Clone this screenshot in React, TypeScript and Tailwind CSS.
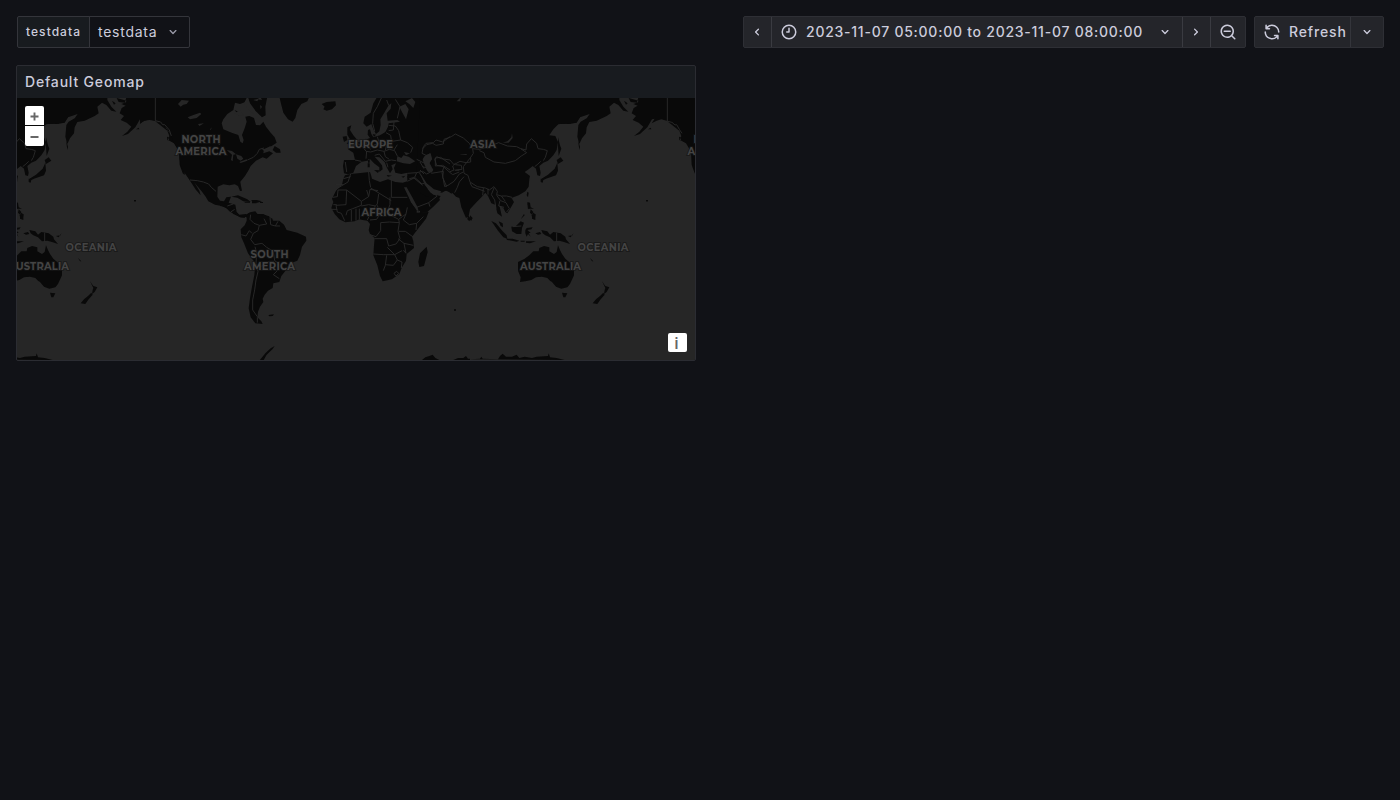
import React from 'react';

const ICONS = {
  down: 'M17,9.17a1,1,0,0,0-1.41,0L12,12.71,8.46,9.17a1,1,0,0,0-1.41,0,1,1,0,0,0,0,1.42l4.24,4.24a1,1,0,0,0,1.42,0L17,10.59A1,1,0,0,0,17,9.17Z',
  clock: 'M12,2A10,10,0,1,0,22,12,10,10,0,0,0,12,2Zm0,18a8,8,0,1,1,8-8A8,8,0,0,1,12,20ZM12,6a1,1,0,0,0-1,1v4H9a1,1,0,0,0,0,2h3a1,1,0,0,0,1-1V7A1,1,0,0,0,12,6Z',
  zoomOut: 'M21.71,20.29,18,16.61A9,9,0,1,0,16.61,18l3.68,3.68a1,1,0,0,0,1.42,0A1,1,0,0,0,21.71,20.29ZM11,18a7,7,0,1,1,7-7A7,7,0,0,1,11,18Zm4-8H7a1,1,0,0,0,0,2h8a1,1,0,0,0,0-2Z',
  sync: 'M19.91,15.51H15.38a1,1,0,0,0,0,2h2.4A8,8,0,0,1,4,12a1,1,0,1,0-2,0,10,10,0,0,0,16.88,7.23V21a1,1,0,0,0,2,0V16.5A1,1,0,0,0,19.91,15.51ZM12,2A10,10,0,0,0,5.12,4.77V3a1,1,0,0,0-2,0V7.5a1,1,0,0,0,1,1h4.5a1,1,0,0,0,0-2H6.22A8,8,0,0,1,20,12a1,1,0,0,0,2,0A10,10,0,0,0,12,2Z',
};

function Icon({ name, className }: { name: keyof typeof ICONS; className: string }) {
  return (
    <svg viewBox="0 0 24 24" fill="currentColor" className={`shrink-0 ${className}`}>
      <path d={ICONS[name]} />
    </svg>
  );
}

type Region = { x: number; y: number; land: string; sea?: string; lines?: string };

// Each region is drawn on its own grid, three units to the pixel.
const REGIONS: Region[] = [
  // Eastern Siberia, Alaska
  {
    x: 560,
    y: 90,
    land: 'M0,20H178V30L190,50 205,65 190,62 175,45 162,38 148,50 152,70 140,78 110,92 88,96 80,112 78,130 66,145 58,162 52,140 55,105 62,95 80,85 89,72 78,76 60,82 48,98 30,102 0,101Z M192,32L203,40 198,44Z M206,24L236,32 232,38 212,36Z M236,20L230,38 220,42 233,47 221,54 215,70 228,78 218,90 236,98 250,110 238,125 222,138 240,132 262,112 276,88 284,86 275,100 290,92 304,88 320,92 340,108 358,122 364,138 360,150 378,160 393,185 395,225 404,250 410,255V20Z M264,118L272,113 274,118Z M357,140L362,142 364,153 358,150Z M258,330H264V334H258Z',
    lines: 'M322,20V94L336,97 345,105 350,104 358,118 366,130',
  },
  // North America
  {
    x: 140,
    y: 90,
    land: 'M0,20H322L318,35 300,42 285,38 280,60 262,72 250,88 245,100 250,118 275,128 295,135 301,155 308,160 311,150 306,135 314,115 320,95 316,80 328,78 342,84 348,105 360,106 370,95 378,110 392,128 404,142 410,158 395,168 372,178 370,190 388,184 399,190 380,206 368,202 348,212 332,228 326,240 315,258 301,275 303,288 306,302 300,303 294,288 284,283 268,286 250,283 233,290 232,320 240,332 252,334 259,322 273,320 266,338 286,344 290,366 298,374 318,372 322,380 302,382 280,372 262,356 245,348 225,344 205,334 197,320 186,305 165,280 160,272 178,302 182,316 168,300 150,272 132,246 122,228 119,205 120,190 110,170 100,155 92,135 80,115 65,103 50,96 45,92 28,90 12,92 0,102Z M324,20H382L376,50 377,76 366,82 350,66 332,52Z M418,20H508L502,34 484,42 472,60 466,84 458,95 444,88 430,68 424,45Z M404,168L420,178 422,188 408,188 398,180Z M274,320L294,316 322,328 332,336 310,334 292,323Z M336,335L350,337 349,340 336,340Z M360,336H369V339H360Z M284,30L300,24 302,35Z M284,60L300,68 296,76Z M315,376L330,367 345,372 370,372 400,388 380,394 330,395Z',
    sea: 'M114,42L125,30 147,32 140,42 130,44 122,50Z M143,82L158,76 180,68 184,72 170,84 150,88Z M174,102L192,100 178,108Z M210,118L216,112 212,120Z M282,70L302,60 310,76 295,76Z M322,20L330,40 345,60 350,72 340,72 322,55 312,40Z M340,30L356,26 352,34Z M360,45L366,50 362,58Z M350,28L362,22 366,30Z M260,180L276,183 288,193 280,194 278,214 273,210 276,194Z M288,193L304,198 310,206 302,212 292,206Z M298,216L320,208 322,212 302,219Z M366,178L376,176 392,168 390,174 376,186Z',
    lines: 'M46,20V92L62,96 68,104 74,104 88,120 94,138 M150,270L172,272 190,276 206,282 214,292 228,304 M322,210L340,202 352,190 358,178 372,174 M262,348L280,342 M272,366L284,358 M232,140L238,165',
  },
  // South America
  {
    x: 220,
    y: 200,
    land: 'M80,46L94,36 106,34 114,44 132,46 146,48 160,62 178,62 192,74 200,90 232,98 258,110 259,122 246,140 240,165 232,182 206,192 200,208 184,228 178,246 160,250 158,264 144,272 134,284 128,296 130,306 120,320 114,335 112,352 124,364 128,372 106,370 92,352 86,325 90,295 96,260 103,225 106,190 84,160 72,130 64,112 62,88 74,76 80,62Z M145,345L162,343 158,348 148,349Z M0,6L22,12 34,22 40,34 52,40 62,50 76,48 74,54 60,52 44,42 28,34 16,20 0,18Z M74,5H90V8H74Z M94,0L110,0 126,4 112,8 98,8Z M118,482L136,460 152,445 164,438 158,447 140,464 130,482Z',
    lines: 'M92,44L90,58 102,70 118,76 114,92 100,100 92,118 104,134 M118,76L140,72 132,56 M150,52L152,74 166,78 174,64 M166,78L180,78 M64,104L78,108 88,92 96,100 M104,134L126,130 140,142 160,154 164,182 176,190 176,208 160,224 M105,140L110,160 108,190 114,215 108,240 104,270 98,300 98,330 112,350 M112,200L126,198 148,184 162,184 M160,224L178,236 M112,352V368',
  },
  // Europe and western Russia
  {
    x: 320,
    y: 90,
    land: 'M172,20L160,40 152,68 134,80 130,100 140,110 154,102 160,118 168,132 178,124 182,105 181,88 192,70 206,46 214,40 212,56 200,70 203,92 232,90 240,95 206,100 204,110 196,126 180,136 160,142 154,132 150,118 144,120 143,134 150,144 128,152 112,158 104,168 84,178 100,188 105,210 72,210 69,228 72,250 84,253 100,248 108,228 125,215 142,212 150,207 162,220 178,232 178,246 188,238 186,226 176,214 164,200 178,202 194,216 200,232 210,250 218,238 214,226 228,220 222,234 226,248 244,252 262,248 262,262 270,280 282,310 292,330 318,330 322,296 350,304 366,308 380,300 395,312V20Z M5,42L20,36 46,34 48,46 36,58 20,62 10,58 14,50Z M82,112L94,106 90,120 100,136 110,148 104,158 80,162 90,148 82,134Z M68,140L80,138 82,150 72,156Z M144,208H149V218H144Z M143,220H149V232H143Z M162,240L178,241 174,249Z M200,255L216,257 204,260Z M244,260L256,257 250,263Z M158,132L168,134 162,140Z',
    sea: 'M230,214L232,198 244,204 250,196 266,200 286,214 270,222 250,220Z M252,186L270,190 258,196Z M238,50L256,42 266,58 258,88 246,66Z M256,34L276,24 286,36 280,54 268,42Z M318,195L332,190 336,206 328,218 340,240 334,248 320,240 318,222 308,208Z',
    lines: 'M164,124L158,100 160,70 172,50 184,24 M206,46L200,30 M226,28L240,50 232,85 M76,216L80,246 M105,210L124,214 M112,160L130,172 138,184 152,186 M140,184L138,206 M138,146L140,170 152,178 M172,140L178,160 200,164 214,150 212,136 198,128 M140,170L160,166 178,160 M152,186L172,180 192,184 208,178 224,182 232,198 M164,196L178,192 M178,192L196,214 214,210 228,212 M192,184L196,200 208,208 M206,106L226,108 236,122 242,150 216,154 M222,96L220,120 206,122 M242,150L262,158 278,172 272,188 M214,154L212,172 M290,208L306,216 318,222 M300,216L312,236 M310,170L318,160 340,158 348,150 368,156 390,140 M346,204L362,202 390,222 M346,204V228L368,226 390,240 M262,250L290,248 308,244 M290,248L284,262 268,266 M284,262L306,282 312,280 M298,248L314,276 M308,244L320,252 332,246 M334,250L370,244 368,262 380,290 M232,164L222,180 M200,164L196,180 M310,170L306,190 318,196 M200,218L204,232',
  },
  // Africa and Arabia
  {
    x: 320,
    y: 170,
    land: 'M75,16L92,12 150,6 154,18 156,26 180,36 204,28 226,36 248,38 262,34 262,18 310,14 316,50 340,74 362,78 352,94 326,116 294,124 290,112 276,88 262,58 254,54 266,78 274,98 290,118 290,128 326,126 318,146 296,174 276,200 280,214 282,234 260,252 258,272 246,292 238,312 216,328 188,334 180,318 172,286 160,256 162,226 164,204 150,192 146,180 150,162 142,152 128,150 118,148 104,154 76,157 58,148 44,132 34,114 40,96 36,86 48,62 66,44 70,26Z M320,230L323,246 312,288 298,291 295,276 300,250Z',
    sea: 'M252,52L260,52 276,80 292,110 296,124 288,118 272,94Z',
    lines: 'M70,26L92,20 M70,44L48,44 M92,12L84,36 54,54 M80,60L54,60 52,80 38,82 M80,60L124,94 146,80 140,60 M80,60L78,104 48,106 M124,94L124,106 98,116 82,122 78,136 M146,80L150,58 174,62 M146,6L148,32 152,52 M152,54L214,92 M214,28V82H262 M210,82V104L204,120 212,136 236,148 258,132 M176,72L172,102 166,108 146,104 124,108 M166,108L152,130 142,150 M172,106L180,132 204,124 M180,132L170,148 150,150 M236,148L238,158 208,156 182,158 182,182 168,200 150,194 M258,132L250,150 268,164 290,160 310,140 M258,132L262,112 M290,160L288,180 M238,158L234,184 240,206 228,222 206,228 200,206 164,206 M236,184L256,184 278,200 M234,206L252,220 280,226 M160,252L190,254 224,254 202,232 M200,256L196,286 190,302 M196,284L220,286 232,270 224,254 246,242 M232,270L246,276 244,294 M222,310L230,304 236,310 228,318Z M252,220L258,250 250,240 M48,106L52,126 64,130 74,152 M94,120V154 M108,116V152 M118,116V148 M262,34L282,24 308,46 M290,112L326,98 352,78 M326,98L330,110 M40,104H50 M36,118H52',
  },
  // Asia
  {
    x: 420,
    y: 90,
    land: 'M0,20H480V82L470,98 440,100 415,103 400,118 388,136 406,138 414,156 410,180 400,196 384,212 370,218 358,228 362,248 360,258 352,256 348,236 338,228 328,236 314,246 330,258 328,268 326,290 316,304 296,316 274,324 282,336 274,350 262,370 256,366 250,354 238,346 246,380 232,370 226,344 214,340 204,318 196,308 184,322 168,338 150,358 146,378 138,384 124,352 118,324 108,320 98,310 78,302 44,302 26,288 12,270 -10,250Z M414,142L420,166 424,176 416,198 414,170Z M410,210L422,202 430,212 414,222Z M412,218L414,242 408,256 378,266 366,272 362,268 384,254 404,236Z M362,266L370,270 368,278 362,276Z M322,305L326,308 324,322 320,316Z M268,328L278,326 274,334Z M322,336L330,338 332,352 342,356 326,356Z M340,368L348,374 344,382 334,378Z M474,150L480,170 478,180Z M144,374L152,386 148,394 142,388Z M112,30L124,22 118,36Z M0,308L20,320 36,322 52,312 60,330 40,350 22,366 0,370Z',
    sea: 'M12,200L30,190 36,208 28,220 38,244 24,246 14,226 8,210Z M110,34L124,20 120,34Z M248,158L262,154 274,142 276,130 278,144 266,158Z M0,248L20,280 42,298 64,304 50,318 32,308 14,284Z M104,240H118V242H104Z M120,194L140,192V195H122Z',
    lines: 'M8,176L20,164 38,160 48,166 70,162 72,148 94,140 106,132 130,144 148,160 158,176 178,178 204,170 236,158 262,168 290,170 302,176 318,180 320,162 334,146 350,160 354,176 370,178 382,182 376,202 370,212 M158,176L160,190 152,202 152,216 138,218 120,214 102,224 90,210 64,206 50,200 44,208 50,226 70,230 88,246 102,240 98,228 106,220 M152,202L130,230 132,250 144,256 150,276 172,290 196,294 208,300 222,290 232,304 230,314 244,318 260,318 276,322 M178,182L192,188 196,202 222,216 256,220 286,212 304,198 320,188 302,176 M106,224L124,226 126,238 106,240 M72,230L66,248 70,268 74,290 84,286 102,274 118,252 130,246 M88,246L98,254 118,246 M132,260L118,276 112,292 104,308 M150,278L156,290 194,304 M190,294L188,316 M204,296L204,314 M222,294L214,314 224,330 228,356 M230,316L242,332 258,338 268,356 260,366 M244,318L256,334 M240,332L236,348 252,352 M344,230L354,222 362,214 M0,240L12,252 M8,230L20,234',
  },
  // South-East Asia and Oceania
  {
    x: 470,
    y: 190,
    land: 'M64,93L78,100 98,124 110,136 112,146 100,142 84,122Z M86,94L98,100 99,112 92,108Z M108,146L128,146 148,152 140,155 112,150Z M152,152H164V155H152Z M168,154L198,154 180,160 168,158Z M124,110L138,108 152,94 162,98 156,114 154,132 140,132 126,124Z M166,120L170,114 188,112 184,118 172,120 182,128 176,130 182,140 174,132 170,140 166,130Z M196,130L210,126 214,132 204,134Z M214,120L232,124 240,134 250,126 272,130 286,140 288,148 300,162 282,156 268,152 252,154 240,142 226,136 218,130Z M172,40H178L180,54 174,58Z M182,58L190,66 186,74 180,68Z M186,78L196,78 196,90 186,86Z M152,88L162,72 164,76Z M294,138L308,136 310,130 302,142Z M320,142L326,146 M360,204L370,214 366,214Z M144,216L164,206 178,196 190,184 206,184 208,174 222,168 238,172 238,184 252,192 260,186 264,166 270,180 276,192 286,206 300,218 312,238 312,256 300,282 292,292 274,296 258,290 246,276 240,272 232,264 216,260 198,262 184,270 166,274 150,276 152,262 144,242Z M276,308L292,310 286,322 280,322Z M396,274L406,288 418,292 410,306 402,312 404,300 406,294Z M400,308L404,314 392,328 382,342 368,340 378,328 390,318Z M528,30H534V34H528Z M418,190L424,194 M0,508L30,506 34,500 38,506 84,508 90,498 98,491 108,500 126,500 140,494 148,504 164,500 186,504 200,500 234,498 236,490 240,502 260,504 284,510Z M0,76L8,84 4,92 0,90Z',
    lines: 'M260,128V156 M128,110L154,108',
  },
  // Antarctic coast south of Africa
  {
    x: 400,
    y: 340,
    land: 'M66,60L76,52 88,48 98,44 106,54 118,60Z M160,60L174,54 190,54 198,48 204,56 210,56V62H160Z M162,-92L168,-92V-88H162Z',
  },
];

const World = () => (
  <>
    {REGIONS.map((r) => (
      <g key={`${r.x}-${r.y}`} transform={`translate(${r.x} ${r.y}) scale(0.33333)`}>
        <path d={r.land} fill="#090909" />
      </g>
    ))}
    {REGIONS.map((r) => (
      <g key={`${r.x}-${r.y}`} transform={`translate(${r.x} ${r.y}) scale(0.33333)`}>
        {r.sea && <path d={r.sea} fill="#262626" />}
        {r.lines && <path d={r.lines} fill="none" stroke="#2a2a2a" strokeWidth="2.8" strokeLinejoin="round" />}
      </g>
    ))}
  </>
);

const LABELS: [string, number, number, number][] = [
  ['NORTH', 201, 142.6, 39],
  ['AMERICA', 201, 154.6, 51],
  ['SOUTH', 269.5, 257.6, 38],
  ['AMERICA', 269.5, 269.6, 51],
  ['EUROPE', 370.5, 148.4, 45],
  ['AFRICA', 381.5, 216.4, 40],
  ['ASIA', 483, 148.4, 26],
  ['OCEANIA', 603, 251.4, 51],
  ['AUSTRALIA', 550.5, 270.4, 61],
  ['OCEANIA', 91, 251.4, 51],
  ['AUSTRALIA', 38.5, 270.4, 61],
  ['NORTH', 713, 142.6, 39],
  ['AMERICA', 713, 154.6, 51],
];

function WorldMap() {
  return (
    <svg viewBox="17 98 678 262" width="678" height="262" className="block bg-[#262626]">
      <g transform="translate(-512 0)"><World /></g>
      <World />
      {LABELS.map(([t, x, y, w], i) => (
        <text
          key={i}
          x={x}
          y={y}
          textAnchor="middle"
          textLength={w}
          fontSize="10"
          fontWeight="700"
          fill="#444444"
          stroke="#151515"
          strokeWidth="2"
          strokeOpacity="0.7"
          paintOrder="stroke"
          fontFamily="Montserrat, Inter, sans-serif"
        >
          {t}
        </text>
      ))}
    </svg>
  );
}

export default function App() {
  return (
    <div className="min-h-screen bg-[#111217] p-4 font-['Inter',sans-serif] text-sm text-[#ccccdc]">
      <header className="flex h-8 items-stretch justify-between">
        <div className="ml-px flex">
          <label className="flex w-[73px] items-center rounded-l-xs border border-[#34353b] bg-[#181b1f] pl-2 text-xs font-medium tracking-[1.05px]">
            testdata
          </label>
          <button className="-ml-px flex w-[101px] items-center justify-between rounded-r-xs border border-[#34353b] pr-2 pl-2 tracking-[0.75px]">
            testdata
            <Icon name="down" className="size-4 text-[#9a9aa8]" />
          </button>
        </div>
        <div className="flex gap-2 font-medium">
          <div className="flex rounded-xs border border-[#2e2f35] bg-[#24252a]">
            <button className="flex w-7 items-center justify-center border-r border-[#3a3b41] pr-px">
              <Icon name="down" className="size-4 rotate-90" />
            </button>
            <button className="flex w-[411px] items-center border-r border-[#3a3b41] pl-2">
              <Icon name="clock" className="size-[18px]" />
              <span className="ml-2 w-[338px] text-left tracking-[0.75px] whitespace-nowrap">2023-11-07 05:00:00 to 2023-11-07 08:00:00</span>
              <Icon name="down" className="ml-[13px] size-4" />
            </button>
            <button className="flex w-7 items-center justify-center border-r border-[#3a3b41] pr-px">
              <Icon name="down" className="size-4 -rotate-90" />
            </button>
            <button className="flex w-[34px] items-center justify-center">
              <Icon name="zoomOut" className="size-[18px]" />
            </button>
          </div>
          <div className="flex rounded-xs border border-[#2e2f35] bg-[#24252a]">
            <button className="flex w-24 items-center border-r border-[#34353b] pl-2">
              <Icon name="sync" className="size-[18px]" />
              <span className="ml-2 tracking-[0.85px]">Refresh</span>
            </button>
            <button className="flex w-8 items-center justify-center">
              <Icon name="down" className="size-4" />
            </button>
          </div>
        </div>
      </header>
      <section className="relative mt-[17px] w-[680px] overflow-hidden rounded-xs border border-[#2b2c32] bg-[#181b1f]">
        <h2 className="flex h-8 items-center pl-2 font-medium tracking-[0.82px]">Default Geomap</h2>
        <WorldMap />
        <div className="absolute top-10 left-2 flex flex-col gap-px text-[#666]">
          <button className="flex h-[19px] w-[19px] items-center justify-center rounded-t-xs bg-white">
            <svg viewBox="0 0 19 19" className="size-[19px]"><path d="M5.5 10.5h8M9.5 6.5v8" stroke="currentColor" strokeWidth="1.9" /></svg>
          </button>
          <button className="flex h-5 w-[19px] items-center justify-center rounded-b-xs bg-white">
            <svg viewBox="0 0 19 19" className="size-[19px]"><path d="M5.5 10h8" stroke="currentColor" strokeWidth="1.9" /></svg>
          </button>
        </div>
        <button className="absolute right-2 bottom-2 flex size-[19px] items-center justify-center rounded-xs bg-white text-[#666]">
          <span className="relative top-px right-px text-[15px] font-semibold">i</span>
        </button>
      </section>
    </div>
  );
}
